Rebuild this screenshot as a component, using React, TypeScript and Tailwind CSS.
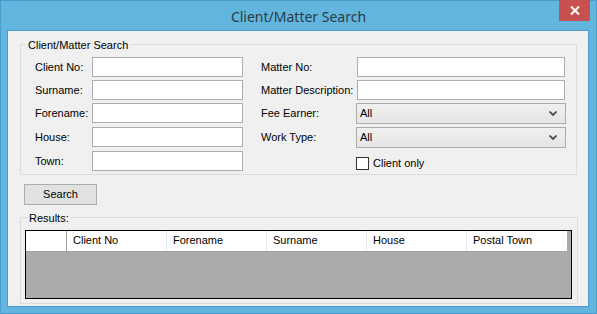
const columns = ['Client No', 'Forename', 'Surname', 'House', 'Postal Town']

function TextBox({ width }: { width: string }) {
  return <div className={`h-[20px] ${width} border border-[#abadb3] bg-white`} />
}

function ComboBox({ value }: { value: string }) {
  return (
    <div className="-ml-px flex h-[21px] w-[210px] items-center border border-[#acacac] bg-gradient-to-b from-[#f0f0f0] to-[#e5e5e5] pl-[3px] pr-[8px]">
      <span className="flex-1">{value}</span>
      <svg width="8" height="5" viewBox="0 0 8 5">
        <path d="M0.5 0.5 L4 4 L7.5 0.5" fill="none" stroke="#4d4d4d" strokeWidth="1.8" />
      </svg>
    </div>
  )
}

function Row({ label, labelWidth, children, className = '' }: { label: string; labelWidth: string; children: React.ReactNode; className?: string }) {
  return (
    <div className={`flex items-center ${className}`}>
      <span className={labelWidth}>{label}</span>
      {children}
    </div>
  )
}

export default function App() {
  return (
    <div className="flex h-[314px] w-[597px] flex-col border border-[#4a9bcb] bg-[#62b6de] text-[11px] text-black [font-family:'Liberation_Sans',Arial,sans-serif]">
      {/* title bar */}
      <div className="relative flex h-[29px] items-center justify-center">
        <span className="pt-[1px] text-[14px] text-[#2b3a46] [font-family:'Noto_Sans','Open_Sans',sans-serif]">
          Client/Matter Search
        </span>
        <div className="absolute right-[6px] top-[-1px] flex h-[21px] w-[31px] items-center justify-center bg-[#c75050]">
          <svg width="10" height="9" viewBox="0 0 10 9">
            <path d="M1 0.5 L9 8.5 M9 0.5 L1 8.5" stroke="white" strokeWidth="2" />
          </svg>
        </div>
      </div>

      {/* client area */}
      <div className="mb-[6px] ml-[6px] mr-[7px] flex flex-1 flex-col border border-[#4a9bcb] bg-[#f0f0f0]">
        {/* search group */}
        <div className="relative ml-[12px] mr-[11px] mt-[13px] flex border border-[#dcdcdc] pb-[2px] pl-[14px] pt-[12px]">
          <span className="absolute left-[5px] top-[-8px] bg-[#f0f0f0] px-[2px]">Client/Matter Search</span>

          <div className="flex flex-col">
            <Row label="Client No:" labelWidth="w-[57px]"><TextBox width="w-[151px]" /></Row>
            <Row label="Surname:" labelWidth="w-[57px]" className="mt-[3px]"><TextBox width="w-[151px]" /></Row>
            <Row label="Forename:" labelWidth="w-[57px]" className="mt-[3px]"><TextBox width="w-[151px]" /></Row>
            <Row label="House:" labelWidth="w-[57px]" className="mt-[4px]"><TextBox width="w-[151px]" /></Row>
            <Row label="Town:" labelWidth="w-[57px]" className="mt-[4px]"><TextBox width="w-[151px]" /></Row>
          </div>

          <div className="ml-[18px] flex flex-col">
            <Row label="Matter No:" labelWidth="w-[96px]"><TextBox width="w-[208px]" /></Row>
            <Row label="Matter Description:" labelWidth="w-[96px]" className="mt-[3px]"><TextBox width="w-[208px]" /></Row>
            <Row label="Fee Earner:" labelWidth="w-[96px]" className="mt-[3px]"><ComboBox value="All" /></Row>
            <Row label="Work Type:" labelWidth="w-[96px]" className="mt-[3px]"><ComboBox value="All" /></Row>
            <div className="ml-[95px] mt-[7px] flex items-center">
              <div className="h-[13px] w-[13px] border border-[#333333] bg-white" />
              <span className="ml-[4px]">Client only</span>
            </div>
          </div>
        </div>

        {/* search button */}
        <div className="ml-[16px] mt-[9px] flex h-[21px] w-[73px] items-center justify-center border border-[#adadad] bg-[#e1e1e1]">
          Search
        </div>

        {/* results group */}
        <div className="relative ml-[12px] mr-[10px] mt-[12px] border border-[#dcdcdc] pb-[4px] pl-[4px] pr-[5px] pt-[12px]">
          <span className="absolute left-[6px] top-[-8px] bg-[#f0f0f0] px-[2px]">Results:</span>
          <div className="flex h-[69px] flex-col border border-black bg-[#ababab]">
            <div className="flex h-[21px] border-b border-[#a0a0a0]">
              <div className="w-[41px] border-r border-[#a0a0a0] bg-white" />
              {columns.map((c, i) => (
                <div
                  key={c}
                  className={`flex w-[100px] items-center bg-white pl-[6px] ${i < columns.length - 1 ? 'border-r border-[#e3ebf5]' : ''}`}
                >
                  {c}
                </div>
              ))}
            </div>
          </div>
        </div>
      </div>
    </div>
  )
}
